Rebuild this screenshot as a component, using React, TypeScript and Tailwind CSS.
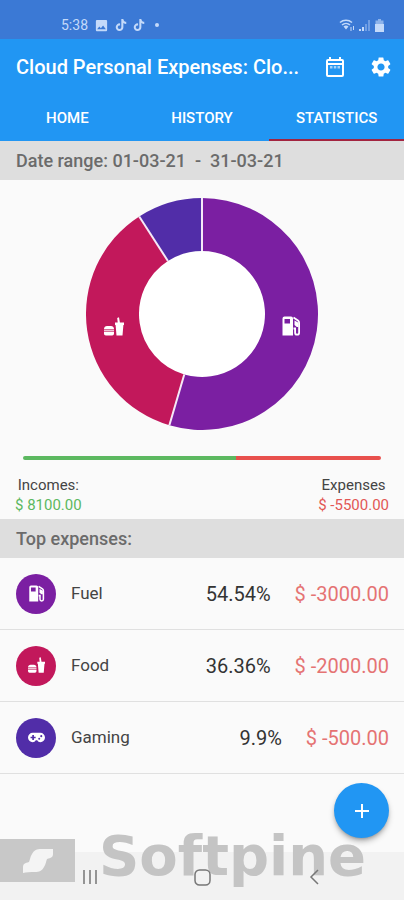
import type { ReactNode } from 'react';
import { MdImage, MdSettings } from 'react-icons/md';
import { FaTiktok } from 'react-icons/fa';

type Category = 'fuel' | 'food' | 'gaming';

const tabs = ['HOME', 'HISTORY', 'STATISTICS'];

const expenses: { id: Category; name: string; percent: string; amount: string; bg: string }[] = [
  { id: 'fuel', name: 'Fuel', percent: '54.54%', amount: '$ -3000.00', bg: 'bg-[#7b1fa2]' },
  { id: 'food', name: 'Food', percent: '36.36%', amount: '$ -2000.00', bg: 'bg-[#c2185b]' },
  { id: 'gaming', name: 'Gaming', percent: '9.9%', amount: '$ -500.00', bg: 'bg-[#512da8]' },
];

const slices = [
  { color: '#7b1fa2', from: 0, to: 0.5454 },
  { color: '#c2185b', from: 0.5454, to: 0.909 },
  { color: '#512da8', from: 0.909, to: 1 },
];

// All category glyphs are drawn in a 20x20 box
const glyphs: Record<Category, ReactNode> = {
  fuel: (
    <>
      <path
        fillRule="evenodd"
        d="M3.500 0.500H10a2 2 0 0 1 2 2v17H1.500v-17a2 2 0 0 1 2-2zM3.500 3v4.500h5.500V3z"
      />
      <path
        d="M12.500 1.500l4.500 3c.7.500 1.100 1.300 1.100 2.200v10a2 2 0 0 1-4 0v-4.200h-1.600"
        fill="none"
        stroke="currentColor"
        strokeWidth="1.800"
      />
      <path d="M13.500 4.500l4 2.200v4.300h-1.700l-2.300-2z" />
    </>
  ),
  food: (
    <>
      <path d="M0 12c0-2 1.500-3 3-3h4c1.500 0 3 1 3 3z" />
      <path d="M0 12.500h10v2H0z" opacity=".75" />
      <path d="M0 15h10v1.500c0 1-.8 2-1.800 2H1.800c-1 0-1.800-1-1.800-2z" />
      <path d="M11 5.500h2.700L13.200 1l1.800-.7.900 5.200H20V8h-.6l-.9 10.500h-6L11.600 8H11z" />
    </>
  ),
  gaming: (
    <path
      fillRule="evenodd"
      d="M5.500 4.500h9a5.500 5.500 0 0 1 0 11c-1.600 0-2.900-1-3.700-2.300H9.200c-.8 1.300-2.100 2.300-3.700 2.300a5.500 5.500 0 0 1 0-11zM5 7v2H3v2h2v2h2v-2h2V9H7V7zm8.200 3.200a1.200 1.200 0 1 0 0 2.400 1.200 1.200 0 0 0 0-2.400zm2.400-3a1.200 1.200 0 1 0 0 2.400 1.200 1.200 0 0 0 0-2.400z"
    />
  ),
};

function point(fraction: number, radius: number) {
  const angle = fraction * 2 * Math.PI;
  return `${116 + radius * Math.sin(angle)} ${116 - radius * Math.cos(angle)}`;
}

function slicePath(from: number, to: number) {
  const large = to - from > 0.5 ? 1 : 0;
  return `M${point(from, 116)}A116 116 0 ${large} 1 ${point(to, 116)}L${point(to, 63)}A63 63 0 ${large} 0 ${point(from, 63)}Z`;
}

function StatusBar() {
  return (
    <div className="flex h-[39px] items-end justify-between bg-[#3b79d5] pr-5 pb-1 pl-[61px] text-[#c4dafa]">
      <div className="flex items-center gap-1.5 text-sm leading-5">
        <span>5:38</span>
        <MdImage size={15} />
        <FaTiktok size={12} />
        <FaTiktok size={12} />
        <span className="ml-1 size-1 rounded-full bg-current" />
      </div>
      <div className="flex h-5 items-center gap-1">
        <svg width="16" height="14" viewBox="0 0 16 14" fill="none" stroke="currentColor" strokeWidth="1.500">
          <path d="M1 4.500a9 9 0 0 1 12 0M3 7a6 6 0 0 1 8 0" />
          <path d="M4.500 8.500a4 4 0 0 1 5 0L7 11.500z" fill="currentColor" stroke="none" />
          <path d="M12 13V9M14.500 8v4" strokeWidth="1" />
        </svg>
        <svg width="12" height="13" viewBox="0 0 12 13" fill="currentColor">
          <path d="M0 10h2v2H0zM3 8h2v4H3z" />
          <path d="M6 5h2v7H6zM9 1h2v11H9z" opacity=".4" />
        </svg>
        <svg width="9" height="13" viewBox="0 0 9 13" fill="currentColor">
          <path d="M3 0h3v1.500h2.500V5h-8V1.500H3z" opacity=".6" />
          <path d="M0 5h9v8H0z" />
        </svg>
      </div>
    </div>
  );
}

function CalendarIcon() {
  return (
    <svg width="20" height="20" viewBox="0 0 20 20" fill="currentColor">
      <path fillRule="evenodd" d="M4 0h2v2h8V0h2v2h1a2 2 0 0 1 2 2v14a2 2 0 0 1-2 2H3a2 2 0 0 1-2-2V4a2 2 0 0 1 2-2h1zM3 4v2h14V4zM3 8v10h14V8z" />
      <path d="M5 9h2.500v2.500H5zM8.800 9h2.500v2.500H8.800zM12.500 9H15v2.500h-2.500z" opacity=".6" />
    </svg>
  );
}

function Header() {
  return (
    <header className="bg-[#2196f3] text-white">
      <div className="flex h-14 items-center pr-[11px] pl-4">
        <h1 className="flex-1 truncate text-xl font-medium">Cloud Personal Expenses: Clo...</h1>
        <div className="flex items-center gap-6">
          <button type="button" aria-label="Date range">
            <CalendarIcon />
          </button>
          <button type="button" aria-label="Settings">
            <MdSettings size={24} />
          </button>
        </div>
      </div>
      <div role="tablist" className="grid h-[46px] grid-cols-3 text-[15px] font-medium">
        {tabs.map((tab) => (
          <button
            key={tab}
            type="button"
            role="tab"
            aria-selected={tab === 'STATISTICS'}
            className="border-b-2 border-transparent pt-0.5 aria-selected:border-[#a32540]"
          >
            {tab}
          </button>
        ))}
      </div>
    </header>
  );
}

function Donut() {
  return (
    <svg viewBox="0 0 232 232" className="mx-auto block size-[232px] text-white" role="img" aria-label="Expenses by category">
      <circle cx="116" cy="116" r="64" fill="#fff" />
      {slices.map((slice) => (
        <path key={slice.color} d={slicePath(slice.from, slice.to)} fill={slice.color} />
      ))}
      {slices.map((slice) => (
        <path key={slice.color} d={`M${point(slice.from, 63)}L${point(slice.from, 116)}`} stroke="#f5e9f7" strokeWidth="2" />
      ))}
      <g fill="currentColor" transform="translate(195 118)">
        {glyphs.fuel}
      </g>
      <g fill="currentColor" transform="translate(18 119)">
        {glyphs.food}
      </g>
    </svg>
  );
}

function Totals() {
  return (
    <section className="px-[15px] pt-[26px] pb-1">
      <div className="mx-2 flex h-1 overflow-hidden rounded-sm">
        <div className="bg-[#5cb860]" style={{ width: `${(8100 / (8100 + 5500)) * 100}%` }} />
        <div className="flex-1 bg-[#e8504d]" />
      </div>
      <div className="mt-[15px] flex justify-between text-center text-[15px] leading-5 text-[#444]">
        <p>
          Incomes:
          <span className="block text-[#5cb860]">$ 8100.00</span>
        </p>
        <p>
          Expenses
          <span className="block text-[#e25755]">$ -5500.00</span>
        </p>
      </div>
    </section>
  );
}

function ExpenseList() {
  return (
    <ul>
      {expenses.map((item) => (
        <li key={item.id} className="flex h-[72px] items-center border-b border-[#e0e0e0] pr-[15px] pl-4">
          <span className={`flex size-10 items-center justify-center rounded-full text-white ${item.bg}`}>
            <svg width="17" height="17" viewBox="0 0 20 20" fill="currentColor">
              {glyphs[item.id]}
            </svg>
          </span>
          <span className="ml-[15px] flex-1 text-[17px] text-[#444]">{item.name}</span>
          <span className="text-xl text-[#333]">{item.percent}</span>
          <span className="ml-6 text-xl text-[#e57373]">{item.amount}</span>
        </li>
      ))}
    </ul>
  );
}

function Watermark() {
  return (
    <div className="pointer-events-none absolute inset-x-0 bottom-0 flex h-[72px] items-start">
      <span className="mt-[11px] flex h-[43px] w-[75px] shrink-0 items-center justify-center bg-[#c8c8c8]">
        <svg width="30" height="24" viewBox="0 0 30 24" fill="#f4f4f4">
          <path d="M30 0v5c0 3-2 4-6 5-1 2-1 5-3 8-2 4-5 5-9 5-5 0-9 0-12 1v-6c0-3 2-4 6-5 1-2 1-5 3-8 2-4 5-5 9-5z" />
        </svg>
      </span>
      <span className="ml-6 font-['DejaVu_Sans'] text-[56px] leading-[56px] font-bold text-[#c4c4c4]">Softpine</span>
    </div>
  );
}

function NavBar() {
  return (
    <nav className="relative flex h-12 items-center justify-between px-[82px] pt-0.5 text-[#777]">
      <button type="button" aria-label="Recent apps" className="w-[17px]">
        <svg width="16" height="16" viewBox="0 0 16 16" stroke="currentColor" strokeWidth="1.500">
          <path d="M2 1v14M8 1v14M14 1v14" />
        </svg>
      </button>
      <button type="button" aria-label="Home" className="w-[17px]">
        <svg width="17" height="17" viewBox="0 0 17 17" fill="none" stroke="currentColor" strokeWidth="1.500">
          <rect x="1" y="1" width="15" height="15" rx="4.500" />
        </svg>
      </button>
      <button type="button" aria-label="Back" className="flex w-[17px] justify-center">
        <svg width="10" height="16" viewBox="0 0 10 16" fill="none" stroke="currentColor" strokeWidth="1.500">
          <path d="M9 1L2 8l7 7" />
        </svg>
      </button>
    </nav>
  );
}

export default function App() {
  return (
    <div className="relative flex min-h-screen flex-col bg-[#fafafa] font-[Roboto,sans-serif]">
      <StatusBar />
      <Header />
      <main className="flex-1">
        <h2 className="h-[39px] bg-[#dedede] px-4 text-lg leading-10 font-medium text-[#6b6b6b]">
          Date range: 01-03-21 &nbsp;-&nbsp; 31-03-21
        </h2>
        <section className="pt-[18px]">
          <Donut />
        </section>
        <Totals />
        <h2 className="h-[39px] bg-[#dedede] px-4 text-lg leading-10 font-medium text-[#6b6b6b]">Top expenses:</h2>
        <ExpenseList />
      </main>
      <div className="relative bg-[#f2f2f2]">
        <Watermark />
        <NavBar />
      </div>
      <button
        type="button"
        aria-label="Add expense"
        className="absolute right-[15px] bottom-[62px] flex size-[55px] items-center justify-center rounded-full bg-[#2196f3] text-white shadow-md shadow-black/30"
      >
        <svg width="14" height="14" viewBox="0 0 14 14" stroke="currentColor" strokeWidth="2">
          <path d="M7 0v14M0 7h14" />
        </svg>
      </button>
    </div>
  );
}
